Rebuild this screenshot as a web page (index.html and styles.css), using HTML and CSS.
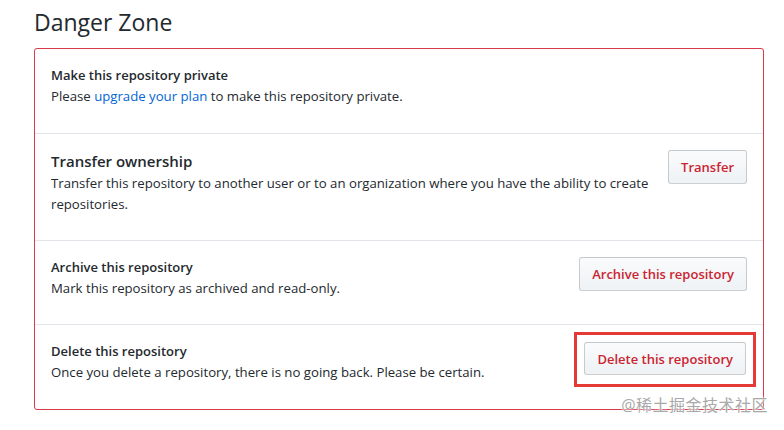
FILE: index.html
```html
<!DOCTYPE html>
<html>
<head>
<meta charset="utf-8">
<link rel="stylesheet" href="styles.css">
</head>
<body>
<div class="page">
  <h2 class="subhead">Danger Zone</h2>
  <div class="danger-box">
    <div class="row">
      <div class="info">
        <strong class="title">Make this repository private</strong>
        <p class="desc">Please <a href="#">upgrade your plan</a> to make this repository private.</p>
      </div>
    </div>
    <div class="row">
      <div class="info">
        <h4 class="title big">Transfer ownership</h4>
        <p class="desc">Transfer this repository to another user or to an organization where you have the ability to create repositories.</p>
      </div>
      <button class="btn">Transfer</button>
    </div>
    <div class="row">
      <div class="info">
        <strong class="title">Archive this repository</strong>
        <p class="desc">Mark this repository as archived and read-only.</p>
      </div>
      <button class="btn">Archive this repository</button>
    </div>
    <div class="row">
      <div class="info">
        <strong class="title">Delete this repository</strong>
        <p class="desc">Once you delete a repository, there is no going back. Please be certain.</p>
      </div>
      <div class="highlight">
        <button class="btn">Delete this repository</button>
      </div>
    </div>
  </div>
  <div class="watermark">@稀土掘金技术社区</div>
</div>
</body>
</html>
```
FILE: styles.css
```css
* { box-sizing: border-box; }
html, body { margin: 0; padding: 0; background: #fff; }
body {
  font-family: "Open Sans", "Noto Sans", "Noto Sans CJK SC", sans-serif;
  color: #24292e;
  font-size: 13.2px;
}
.page {
  position: relative;
  width: 784px;
  height: 430px;
  padding: 4px 20px 0 34px;
}
.subhead {
  margin: 0 0 8px 0;
  font-size: 23px;
  font-weight: 400;
  line-height: 36px;
}
.danger-box {
  width: 730px;
  border: 1px solid #d73a49;
  border-radius: 3px;
}
.row {
  display: flex;
  align-items: flex-start;
  justify-content: space-between;
  padding: 16px 16px 25px;
  border-top: 1px solid #e1e4e8;
}
.row:first-child { border-top: 0; padding-bottom: 26px; }
.row:last-child { padding-bottom: 26px; }
.info { flex: 1; }
.title {
  display: block;
  margin: 0;
  font-size: 13px;
  font-weight: 600;
  line-height: 21px;
}
.title.big {
  font-size: 15px;
  line-height: 23px;
}
.desc {
  margin: 0;
  line-height: 21px;
  max-width: 600px;
}
.desc a { color: #0366d6; text-decoration: none; }
.btn {
  flex: none;
  font-family: inherit;
  font-size: 13px;
  font-weight: 600;
  color: #cb2431;
  line-height: 20px;
  padding: 6px 12px;
  height: 34px;
  border: 1px solid rgba(27, 31, 35, 0.2);
  border-radius: 3px;
  background: linear-gradient(#fafbfc, #eff3f6 90%);
}
.row:last-child .btn { height: 33px; }
.highlight {
  margin: -9px -9px -14px 0;
  padding: 7px 7px 9px 7px;
  border: 3px solid #e53935;
}
.watermark {
  position: absolute;
  right: 16px;
  top: 392px;
  font-size: 16px;
  color: #a9a9a9;
  text-shadow: 0 0 2px #fff, 0 0 2px #fff;
  letter-spacing: 0.5px;
}
```
